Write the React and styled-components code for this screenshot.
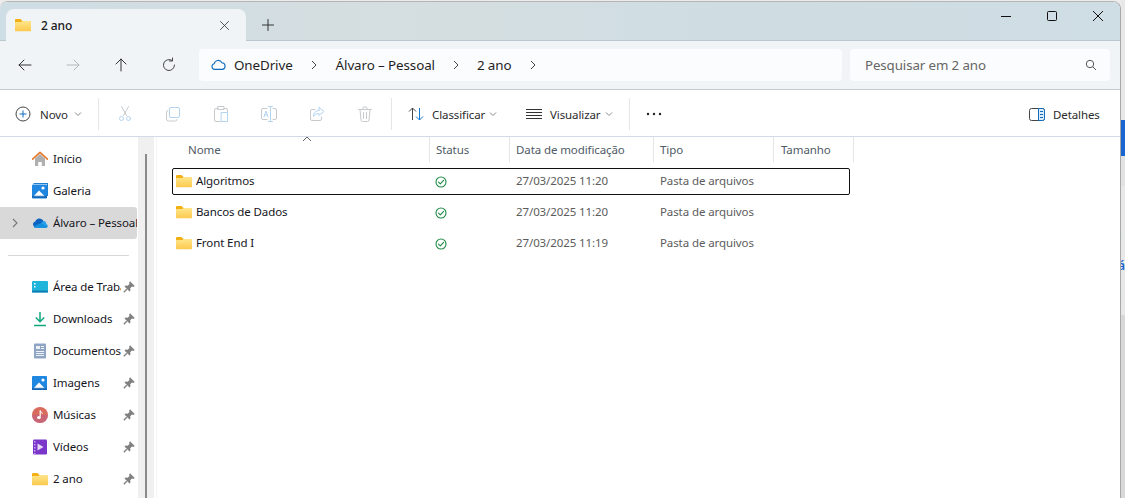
import React, { useId } from 'react';
import styled, { createGlobalStyle } from 'styled-components';

const GlobalStyle = createGlobalStyle`
  html, body {
    margin: 0;
    padding: 0;
    background: #e9e9e9;
    overflow: hidden;
  }
  * {
    box-sizing: border-box;
  }
`;

const Screen = styled.div`
  width: 1125px;
  height: 498px;
  display: flex;
  overflow: hidden;
  background: #ececec;
  font-family: "Noto Sans", "Open Sans", sans-serif;
  font-size: 11.5px;
  letter-spacing: -0.1px;
  color: #1b1b1b;
`;

const Window = styled.div`
  width: 1121px;
  height: 498px;
  margin-top: 1px;
  display: flex;
  flex-direction: column;
  background: #fff;
  border-top: 1px solid #b4b4b4;
  border-right: 1px solid #a8a8a8;
  border-radius: 8px 8px 0 0;
  overflow: hidden;
`;

const BackStrip = styled.div`
  flex: 1;
  height: 498px;
  display: flex;
  flex-direction: column;
  background: #dedede;
  font-size: 12px;
  font-weight: 600;
`;

const StripBlock = styled.div`
  height: ${(p) => p.$h}px;
  flex: none;
  background: ${(p) => p.$bg || '#e8e8e8'};
  color: ${(p) => p.$color || '#1a66d0'};
  overflow: hidden;
  line-height: ${(p) => p.$h}px;
  text-indent: -3px;
`;

const TitleBar = styled.div`
  height: 39px;
  flex: none;
  display: flex;
  align-items: flex-end;
  padding-left: 6px;
  background: linear-gradient(90deg, #cfdde5 0%, #d5dee0 35%, #cfdde3 65%, #cfdde4 100%);
  border-bottom: 1px solid #bcc8cf;
`;

const Tab = styled.div`
  width: 240px;
  height: 32px;
  margin-bottom: -1px;
  display: flex;
  align-items: center;
  padding: 0 15px 0 9px;
  background: #f0f4f7;
  border-radius: 8px 8px 0 0;
  position: relative;
  z-index: 1;
`;

const TabTitle = styled.span`
  flex: 1;
  margin-left: 10px;
  font-size: 12px;
  font-weight: 500;
  color: #1a1a1a;
`;

const NewTab = styled.div`
  width: 16px;
  height: 16px;
  margin: 0 0 7px 14px;
  display: flex;
`;

const WindowControls = styled.div`
  margin-left: auto;
  margin-right: -1px;
  align-self: flex-start;
  display: flex;
`;

const WindowControl = styled.div`
  width: 46px;
  height: 28px;
  display: flex;
  align-items: center;
  justify-content: center;
`;

const NavBar = styled.div`
  height: 49px;
  flex: none;
  display: flex;
  align-items: center;
  padding: 0 10px 1px 1px;
  background: #f0f4f7;
  border-bottom: 1px solid #c6cbcf;
`;

const NavButton = styled.div`
  width: 48px;
  height: 32px;
  flex: none;
  display: flex;
  align-items: center;
  justify-content: center;
`;

const AddressBar = styled.div`
  flex: 1;
  height: 32px;
  margin-left: 6px;
  display: flex;
  align-items: center;
  padding-left: 12px;
  background: #fbfcfd;
  border-radius: 4px;
  font-size: 13.4px;
  color: #1f1f1f;
`;

const Crumb = styled.span`
  margin-left: ${(p) => p.$gap}px;
  white-space: nowrap;
`;

const CrumbArrow = styled.div`
  width: 10px;
  height: 10px;
  margin-left: ${(p) => p.$gap}px;
  display: flex;
`;

const SearchBox = styled.div`
  width: 260px;
  height: 32px;
  margin-left: 8px;
  flex: none;
  display: flex;
  align-items: center;
  justify-content: space-between;
  padding: 0 13px 0 15px;
  background: #fbfcfd;
  border-radius: 4px;
  font-size: 13.3px;
  color: #666;
`;

const Toolbar = styled.div`
  height: 47px;
  flex: none;
  display: flex;
  align-items: center;
  padding-top: 2px;
  background: #fff;
  border-bottom: 1px solid #d2dce6;
`;

const ToolSeparator = styled.div`
  width: 1px;
  height: 32px;
  flex: none;
  margin-left: ${(p) => p.$left || 0}px;
  background: #e6e6e6;
`;

const ToolIcon = styled.div`
  width: 48px;
  height: 32px;
  flex: none;
  display: flex;
  align-items: center;
  justify-content: center;
  margin-left: ${(p) => p.$left || 0}px;
`;

const ToolAction = styled.div`
  flex: none;
  height: 32px;
  display: flex;
  align-items: center;
  margin-left: ${(p) => p.$left}px;
  color: #2b2b2b;
  white-space: nowrap;
`;

const ToolLabel = styled.span`
  margin-left: ${(p) => p.$left}px;
  width: ${(p) => p.$w}px;
`;

const Body = styled.div`
  flex: 1;
  display: flex;
  min-height: 0;
`;

const Sidebar = styled.nav`
  width: 138px;
  flex: none;
  padding-top: 6px;
  overflow: hidden;
`;

const SideItem = styled.div`
  width: 137px;
  height: 32px;
  display: flex;
  align-items: center;
  background: ${(p) => (p.$active ? '#d9d9d9' : 'transparent')};
  border-radius: 0 3px 3px 0;
`;

const SideChevron = styled.div`
  width: 32px;
  flex: none;
  display: flex;
  justify-content: center;
  padding-right: 3px;
`;

const SideIcon = styled.div`
  width: 16px;
  height: 16px;
  flex: none;
  display: flex;
`;

const SideLabel = styled.div`
  width: ${(p) => p.$w}px;
  margin-left: 5px;
  padding-bottom: 1px;
  flex: none;
  overflow: hidden;
  white-space: nowrap;
  color: #15151c;
`;

const SidePin = styled.div`
  width: 12px;
  height: 12px;
  margin-left: 2px;
  flex: none;
  display: flex;
`;

const SideDivider = styled.div`
  height: 1px;
  margin: 16px 9px 15px 8px;
  background: #d8d8d8;
`;

const ScrollTrack = styled.div`
  width: 16px;
  flex: none;
  display: flex;
  justify-content: center;
  padding-top: 17px;
  background: #f0f0f0;
`;

const ScrollThumb = styled.div`
  width: 2px;
  height: 100%;
  background: #8a8a8a;
`;

const Content = styled.main`
  flex: 1;
  margin-left: 2px;
  padding-left: 15px;
  border-left: 1px solid #f4f4f4;
  position: relative;
`;

const SortCaret = styled.div`
  position: absolute;
  left: 145px;
  top: -1px;
  width: 10px;
  height: 6px;
  display: flex;
`;

const HeaderRow = styled.div`
  display: grid;
  grid-template-columns: 258px 80px 144px 120px 80px;
  height: 25px;
  margin-bottom: 6px;
`;

const HeaderCell = styled.div`
  display: flex;
  align-items: center;
  padding-left: ${(p) => p.$pad}px;
  border-right: 1px solid #e5e5e5;
  color: #4f5b66;
`;

const FileRow = styled.div`
  width: 678px;
  height: 27px;
  margin-bottom: 4px;
  display: grid;
  grid-template-columns: 258px 79px 144px 119px;
  align-items: center;
  border: 1px solid ${(p) => (p.$selected ? '#111' : 'transparent')};
  border-radius: 2px;
`;

const NameCell = styled.div`
  display: flex;
  align-items: center;
  gap: 4px;
  padding: 0 0 2px 3px;
  color: #15151c;
`;

const StatusCell = styled.div`
  display: flex;
  padding-left: 4px;
`;

const MetaCell = styled.div`
  padding: 0 0 2px 6px;
  color: #5c5c5c;
  white-space: nowrap;
`;

// line icon on a 16px grid, with an optional second tone for the accent strokes
const Line = ({ d, c = '#333', d2, c2, w = 1, size = 16 }) => (
  <svg width={size} height={size} viewBox="0 0 16 16" fill="none" stroke={c} strokeWidth={w} strokeLinecap="round" strokeLinejoin="round">
    <path d={d} />
    {d2 && <path d={d2} stroke={c2} />}
  </svg>
);

const Folder = ({ size = 16 }) => {
  const id = useId().replace(/\W/g, '');
  return (
    <svg width={size} height={size} viewBox="0 0 16 16">
      <defs>
        <linearGradient id={id} x1="0" y1="0" x2="0" y2="1">
          <stop offset="0" stopColor="#ffe68c" />
          <stop offset="1" stopColor="#fcc94d" />
        </linearGradient>
      </defs>
      <path d="M0 3a1 1 0 0 1 1-1h4.5l2 2H15a1 1 0 0 1 1 1v2H0z" fill="#f3b015" />
      <path d="M0 6a1 1 0 0 1 1-1h5.5l1-1H15a1 1 0 0 1 1 1v8.5a.8.8 0 0 1-.8.8H.8a.8.8 0 0 1-.8-.8z" fill={`url(#${id})`} />
    </svg>
  );
};

const HomeIcon = () => (
  <svg width="16" height="16" viewBox="0 0 16 16">
    <path d="M3 7.5 8 3l5 4.5V15H9.8v-4H6.2v4H3z" fill="#b0b0b0" />
    <path d="M.6 8.2 8 1.4l7.4 6.8" fill="none" stroke="#e8782a" strokeWidth="1.6" strokeLinecap="round" strokeLinejoin="round" />
  </svg>
);

const PictureIcon = ({ back }) => (
  <svg width="16" height="16" viewBox="0 0 16 16">
    {back && <path d="M1.5 0H16v13h-1V1H1.5z" fill="#1f7fd1" />}
    <rect x="0" y={back ? 1.5 : 1} width="15" height="14" rx="1" fill="#1f87e0" />
    <circle cx="11" cy="5" r="1.6" fill="#fff" />
    <path d="M1 14 7 7.5 13.5 14z" fill="#fff" />
    <path d="M0 15h15v-2.2H0z" fill="#0f63b5" opacity=".85" />
  </svg>
);

const OneDriveFill = () => (
  <svg width="16" height="16" viewBox="0 0 16 16">
    <path d="M4 12.5A3 3 0 0 1 3.3 6.6 4.4 4.4 0 0 1 11.5 6l-3 6.5z" fill="#0c64c0" />
    <path d="M6 12.5 11 6.1a3 3 0 0 1 3.3 3A2 2 0 0 1 14 13H6z" fill="#2aa0ea" />
    <path d="M2 12.8h11.5a2 2 0 0 0 1.8-1.6L9 8.2 3 10.5z" fill="#1490df" />
  </svg>
);

const DesktopIcon = () => (
  <svg width="16" height="16" viewBox="0 0 16 16">
    <rect x="0" y="2" width="16" height="11.5" rx="1" fill="#22b5dc" />
    <rect x="0" y="11.5" width="16" height="2" fill="#117fb3" />
    <path d="M2 4h1.5v1.5H2zM2 7h1.5v1.5H2z" fill="#fff" />
  </svg>
);

const DownloadIcon = () => (
  <svg width="16" height="16" viewBox="0 0 16 16" fill="none" stroke="#12a67c" strokeWidth="1.5">
    <path d="M8 1v9.5M3.8 6.5 8 10.7l4.2-4.2M2 14.6h12" />
  </svg>
);

const DocumentIcon = () => (
  <svg width="16" height="16" viewBox="0 0 16 16">
    <rect x="2" y="0.5" width="12" height="15" rx="1" fill="#8ea5c4" />
    <path d="M4 3h4v3H4zM9 3h3v1H9zM9 5h3v1H9zM4 8h8v1H4zM4 10h8v1H4zM4 12h8v1H4z" fill="#eef2f7" />
  </svg>
);

const MusicIcon = () => (
  <svg width="16" height="16" viewBox="0 0 16 16">
    <circle cx="8" cy="8" r="8" fill="#d96b5c" />
    <path d="M8 8 16 8A8 8 0 0 1 8 16 8 8 0 0 1 0 8z" fill="#b9628c" opacity=".55" />
    <path d="M8.2 3.5v6.2" stroke="#fff" strokeWidth="1.2" />
    <ellipse cx="6.9" cy="10.4" rx="1.9" ry="1.5" fill="#fff" />
    <path d="M8.2 3.5c.4 1.5 2 1.6 2.2 3.2" stroke="#fff" strokeWidth="1" fill="none" />
  </svg>
);

const VideoIcon = () => (
  <svg width="16" height="16" viewBox="0 0 16 16">
    <rect x="1" y="0.5" width="14" height="15" rx="1.2" fill="#7a35c9" />
    <path d="M5.5 4.5v7l6-3.5z" fill="#e6d6fa" />
    <path d="M2 2h1.5v1.5H2zM2 5h1.5v1.5H2zM2 8h1.5v1.5H2zM2 11h1.5v1.5H2zM2 14h1.5v1H2z" fill="#c8a6f2" />
  </svg>
);

const PinIcon = () => (
  <svg width="12" height="12" viewBox="0 0 12 12">
    <path d="M7 .3 11.7 5 10.3 5.9 9 5.5 7.2 7.3l.3 2.2-1 1L1.500 5.500l1-1 2.200.3L6.500 3l-.4-1.300z" fill="#808080" />
    <path d="M3.8 8.2.8 11.2" stroke="#808080" strokeWidth="1.3" />
  </svg>
);

const StatusIcon = () => (
  <svg width="12" height="12" viewBox="0 0 12 12" fill="none" stroke="#1f8a45" strokeWidth="1.1">
    <circle cx="6" cy="6" r="5" />
    <path d="M3.5 6.1 5.3 7.9 8.6 4.4" strokeLinecap="round" strokeLinejoin="round" />
  </svg>
);

const Chevron = ({ c = '#888' }) => (
  <svg width="8" height="8" viewBox="0 0 8 8" fill="none" stroke={c} strokeWidth="1">
    <path d="M1 2.5 4 5.5 7 2.5" />
  </svg>
);

const CrumbGlyph = () => (
  <svg width="10" height="10" viewBox="0 0 10 10" fill="none" stroke="#444" strokeWidth="1">
    <path d="M3 1l4 4-4 4" />
  </svg>
);

const pale = '#b3d4f0';
const paleGray = '#c6cacd';

const sideTop = [
  { label: 'Início', icon: <HomeIcon /> },
  { label: 'Galeria', icon: <PictureIcon back /> },
];

const quickAccess = [
  { label: 'Área de Trabalho', icon: <DesktopIcon /> },
  { label: 'Downloads', icon: <DownloadIcon /> },
  { label: 'Documentos', icon: <DocumentIcon /> },
  { label: 'Imagens', icon: <PictureIcon /> },
  { label: 'Músicas', icon: <MusicIcon /> },
  { label: 'Vídeos', icon: <VideoIcon /> },
  { label: '2 ano', icon: <Folder /> },
];

const files = [
  { name: 'Algoritmos', date: '27/03/2025 11:20', selected: true },
  { name: 'Bancos de Dados', date: '27/03/2025 11:20' },
  { name: 'Front End I', date: '27/03/2025 11:19' },
];

const App = () => (
  <Screen>
    <GlobalStyle />
    <Window>
      <TitleBar>
        <Tab>
          <Folder />
          <TabTitle>2 ano</TabTitle>
          <Line d="M3 3l10 10M13 3 3 13" c="#333" size={13} />
        </Tab>
        <NewTab>
          <Line d="M8 2.5v11M2.5 8h11" c="#333" />
        </NewTab>
        <WindowControls>
          <WindowControl>
            <svg width="12" height="12" viewBox="0 0 12 12"><path d="M1 6.5h10" stroke="#111" /></svg>
          </WindowControl>
          <WindowControl>
            <svg width="12" height="12" viewBox="0 0 12 12"><rect x="1.5" y="1.5" width="9" height="9" rx="1" fill="none" stroke="#111" /></svg>
          </WindowControl>
          <WindowControl>
            <svg width="12" height="12" viewBox="0 0 12 12"><path d="M1 1l10 10M11 1 1 11" stroke="#111" /></svg>
          </WindowControl>
        </WindowControls>
      </TitleBar>

      <NavBar>
        <NavButton><Line d="M14 8H2M7 3 2 8l5 5" c="#333" /></NavButton>
        <NavButton><Line d="M2 8h12M9 3l5 5-5 5" c="#b4b8bc" /></NavButton>
        <NavButton><Line d="M8 14V2M3 7l5-5 5 5" c="#333" /></NavButton>
        <NavButton><Line d="M13.5 8A5.5 5.5 0 1 1 11 3.4M11.5 1v3h-3" c="#444" /></NavButton>
        <AddressBar>
          <svg width="15" height="11" viewBox="0 0 15 11" fill="none" stroke="#0f6cbd" strokeWidth="1.1">
            <path d="M3.6 10.4a2.9 2.9 0 0 1-.4-5.7 4.1 4.1 0 0 1 7.7-1 3.4 3.4 0 0 1 .6 6.7z" strokeLinejoin="round" />
          </svg>
          <Crumb $gap={8}>OneDrive</Crumb>
          <CrumbArrow $gap={16}><CrumbGlyph /></CrumbArrow>
          <Crumb $gap={17}>Álvaro – Pessoal</Crumb>
          <CrumbArrow $gap={16}><CrumbGlyph /></CrumbArrow>
          <Crumb $gap={16}>2 ano</Crumb>
          <CrumbArrow $gap={17}><CrumbGlyph /></CrumbArrow>
        </AddressBar>
        <SearchBox>
          Pesquisar em 2 ano
          <svg width="12" height="12" viewBox="0 0 12 12" fill="none" stroke="#555" strokeWidth="1">
            <circle cx="5" cy="5" r="3.7" />
            <path d="M7.8 7.8 11 11" />
          </svg>
        </SearchBox>
      </NavBar>

      <Toolbar>
        <ToolAction $left={15}>
          <svg width="16" height="16" viewBox="0 0 16 16" fill="none">
            <circle cx="8" cy="8" r="7" stroke="#444" />
            <path d="M8 4.5v7M4.5 8h7" stroke="#0f6cbd" />
          </svg>
          <ToolLabel $left={9} $w={34}>Novo</ToolLabel>
          <Chevron />
        </ToolAction>
        <ToolSeparator $left={16} />
        <ToolIcon $left={2}>
          <Line d="M4.5 .5 9.5 9.5M11.5 .5 6.5 9.5" c={paleGray} d2="M6.5 12.5a2 2 0 1 1-4 0 2 2 0 0 1 4 0zM13.5 12.5a2 2 0 1 1-4 0 2 2 0 0 1 4 0z" c2={pale} />
        </ToolIcon>
        <ToolIcon>
          <Line d="M2.8 4.5A1.5 1.5 0 0 0 1.5 6v7A2 2 0 0 0 3.5 15h7A1.5 1.5 0 0 0 12 13.5" c={paleGray} d2="M6 1.5h7A1.5 1.5 0 0 1 14.5 3v7a1.5 1.5 0 0 1-1.5 1.5H6A1.5 1.5 0 0 1 4.5 10V3A1.5 1.5 0 0 1 6 1.5z" c2={pale} />
        </ToolIcon>
        <ToolIcon>
          <Line d="M5 2.5H3A1.5 1.5 0 0 0 1.5 4v10A1.5 1.5 0 0 0 3 15.5h4M5 .5h6v3H5zM11 2.5h2A1.5 1.5 0 0 1 14.5 4v2" c={paleGray} d2="M8.5 6.5h6v9h-6z" c2={pale} />
        </ToolIcon>
        <ToolIcon>
          <Line d="M6 2.5H2A1.5 1.5 0 0 0 .5 4v8A1.5 1.5 0 0 0 2 13.5h4M12 2.5h2A1.5 1.5 0 0 1 15.5 4v8a1.5 1.5 0 0 1-1.5 1.5h-2" c={paleGray} d2="M7.5 .5h4M7.5 15.5h4M9.5 .5v15M3 11l2-6 2 6M3.7 9h2.6" c2={pale} />
        </ToolIcon>
        <ToolIcon>
          <Line d="M6 3.5H3A1.5 1.5 0 0 0 1.5 5v8A1.5 1.5 0 0 0 3 14.5h8a1.5 1.5 0 0 0 1.5-1.5v-2" c={paleGray} d2="M10 1.5l5 4-5 4V7.5c-3 0-4.5 1-5.5 3 0-3.5 2-6 5.500-6z" c2={pale} />
        </ToolIcon>
        <ToolIcon>
          <Line d="M1.5 3.5h13M6 3.5V2a1 1 0 0 1 1-1h2a1 1 0 0 1 1 1v1.5M3 3.5l1 10.5a1.5 1.5 0 0 0 1.5 1.5h5a1.5 1.5 0 0 0 1.5-1.5l1-10.5M6.5 6.5v6M9.5 6.5v6" c={paleGray} />
        </ToolIcon>
        <ToolSeparator $left={2} />
        <ToolAction $left={16}>
          <svg width="16" height="16" viewBox="0 0 16 16" fill="none" strokeWidth="1">
            <path d="M4.5 14V2M1 5.5l3.500-3.500L8 5.500" stroke="#444" />
            <path d="M11.5 2v12M8 10.5l3.500 3.500 3.500-3.500" stroke="#0f7ad8" />
          </svg>
          <ToolLabel $left={8} $w={57}>Classificar</ToolLabel>
          <Chevron />
        </ToolAction>
        <ToolAction $left={29}>
          <svg width="16" height="16" viewBox="0 0 16 16" stroke="#333" strokeWidth="1">
            <path d="M0 3.5h16M0 6.5h16M0 9.5h16M0 12.5h16" />
          </svg>
          <ToolLabel $left={8} $w={55}>Visualizar</ToolLabel>
          <Chevron />
        </ToolAction>
        <ToolSeparator $left={16} />
        <ToolAction $left={16}>
          <svg width="16" height="4" viewBox="0 0 16 4" fill="#222">
            <circle cx="2" cy="2" r="1.2" /><circle cx="8" cy="2" r="1.2" /><circle cx="14" cy="2" r="1.2" />
          </svg>
        </ToolAction>
        <ToolAction $left={367}>
          <svg width="16" height="13" viewBox="0 0 16 13" fill="none" strokeWidth="1">
            <rect x=".5" y=".5" width="15" height="12" rx="2" stroke="#444" />
            <path d="M9.5 .5H13.5a2 2 0 0 1 2 2v8a2 2 0 0 1-2 2H9.5z" fill="#dcecfa" stroke="#0f6cbd" />
            <path d="M11 3.5h3M11 6.5h3M11 9.5h3" stroke="#0f6cbd" />
          </svg>
          <ToolLabel $left={8}>Detalhes</ToolLabel>
        </ToolAction>
      </Toolbar>

      <Body>
        <Sidebar>
          {sideTop.map((item) => (
            <SideItem key={item.label}>
              <SideChevron />
              <SideIcon>{item.icon}</SideIcon>
              <SideLabel $w={84}>{item.label}</SideLabel>
            </SideItem>
          ))}
          <SideItem $active>
            <SideChevron>
              <svg width="8" height="10" viewBox="0 0 8 10" fill="none" stroke="#777" strokeWidth="1.1">
                <path d="M2 1l4 4-4 4" />
              </svg>
            </SideChevron>
            <SideIcon><OneDriveFill /></SideIcon>
            <SideLabel $w={84}>Álvaro – Pessoal</SideLabel>
          </SideItem>
          <SideDivider />
          {quickAccess.map((item) => (
            <SideItem key={item.label}>
              <SideChevron />
              <SideIcon>{item.icon}</SideIcon>
              <SideLabel $w={68}>{item.label}</SideLabel>
              <SidePin><PinIcon /></SidePin>
            </SideItem>
          ))}
        </Sidebar>
        <ScrollTrack><ScrollThumb /></ScrollTrack>
        <Content>
          <SortCaret>
            <svg width="10" height="6" viewBox="0 0 10 6" fill="none" stroke="#666" strokeWidth="1">
              <path d="M1 5 5 1l4 4" />
            </svg>
          </SortCaret>
          <HeaderRow>
            <HeaderCell $pad={16}>Nome</HeaderCell>
            <HeaderCell $pad={6}>Status</HeaderCell>
            <HeaderCell $pad={6}>Data de modificação</HeaderCell>
            <HeaderCell $pad={6}>Tipo</HeaderCell>
            <HeaderCell $pad={7}>Tamanho</HeaderCell>
          </HeaderRow>
          {files.map((file) => (
            <FileRow key={file.name} $selected={file.selected}>
              <NameCell><Folder />{file.name}</NameCell>
              <StatusCell><StatusIcon /></StatusCell>
              <MetaCell>{file.date}</MetaCell>
              <MetaCell>Pasta de arquivos</MetaCell>
            </FileRow>
          ))}
        </Content>
      </Body>
    </Window>
    <BackStrip>
      <StripBlock $h={120} />
      <StripBlock $h={36} $bg="#1a66d0" />
      <StripBlock $h={30} $bg="#e2e2e2" />
      <StripBlock $h={46} />
      <StripBlock $h={10} $color="#555">l</StripBlock>
      <StripBlock $h={16} />
      <StripBlock $h={16}>á</StripBlock>
      <StripBlock $h={13} />
      <StripBlock $h={16}>i</StripBlock>
      <StripBlock $h={12} />
      <StripBlock $h={183} $bg="#d8d8d8" />
    </BackStrip>
  </Screen>
);

export default App;
